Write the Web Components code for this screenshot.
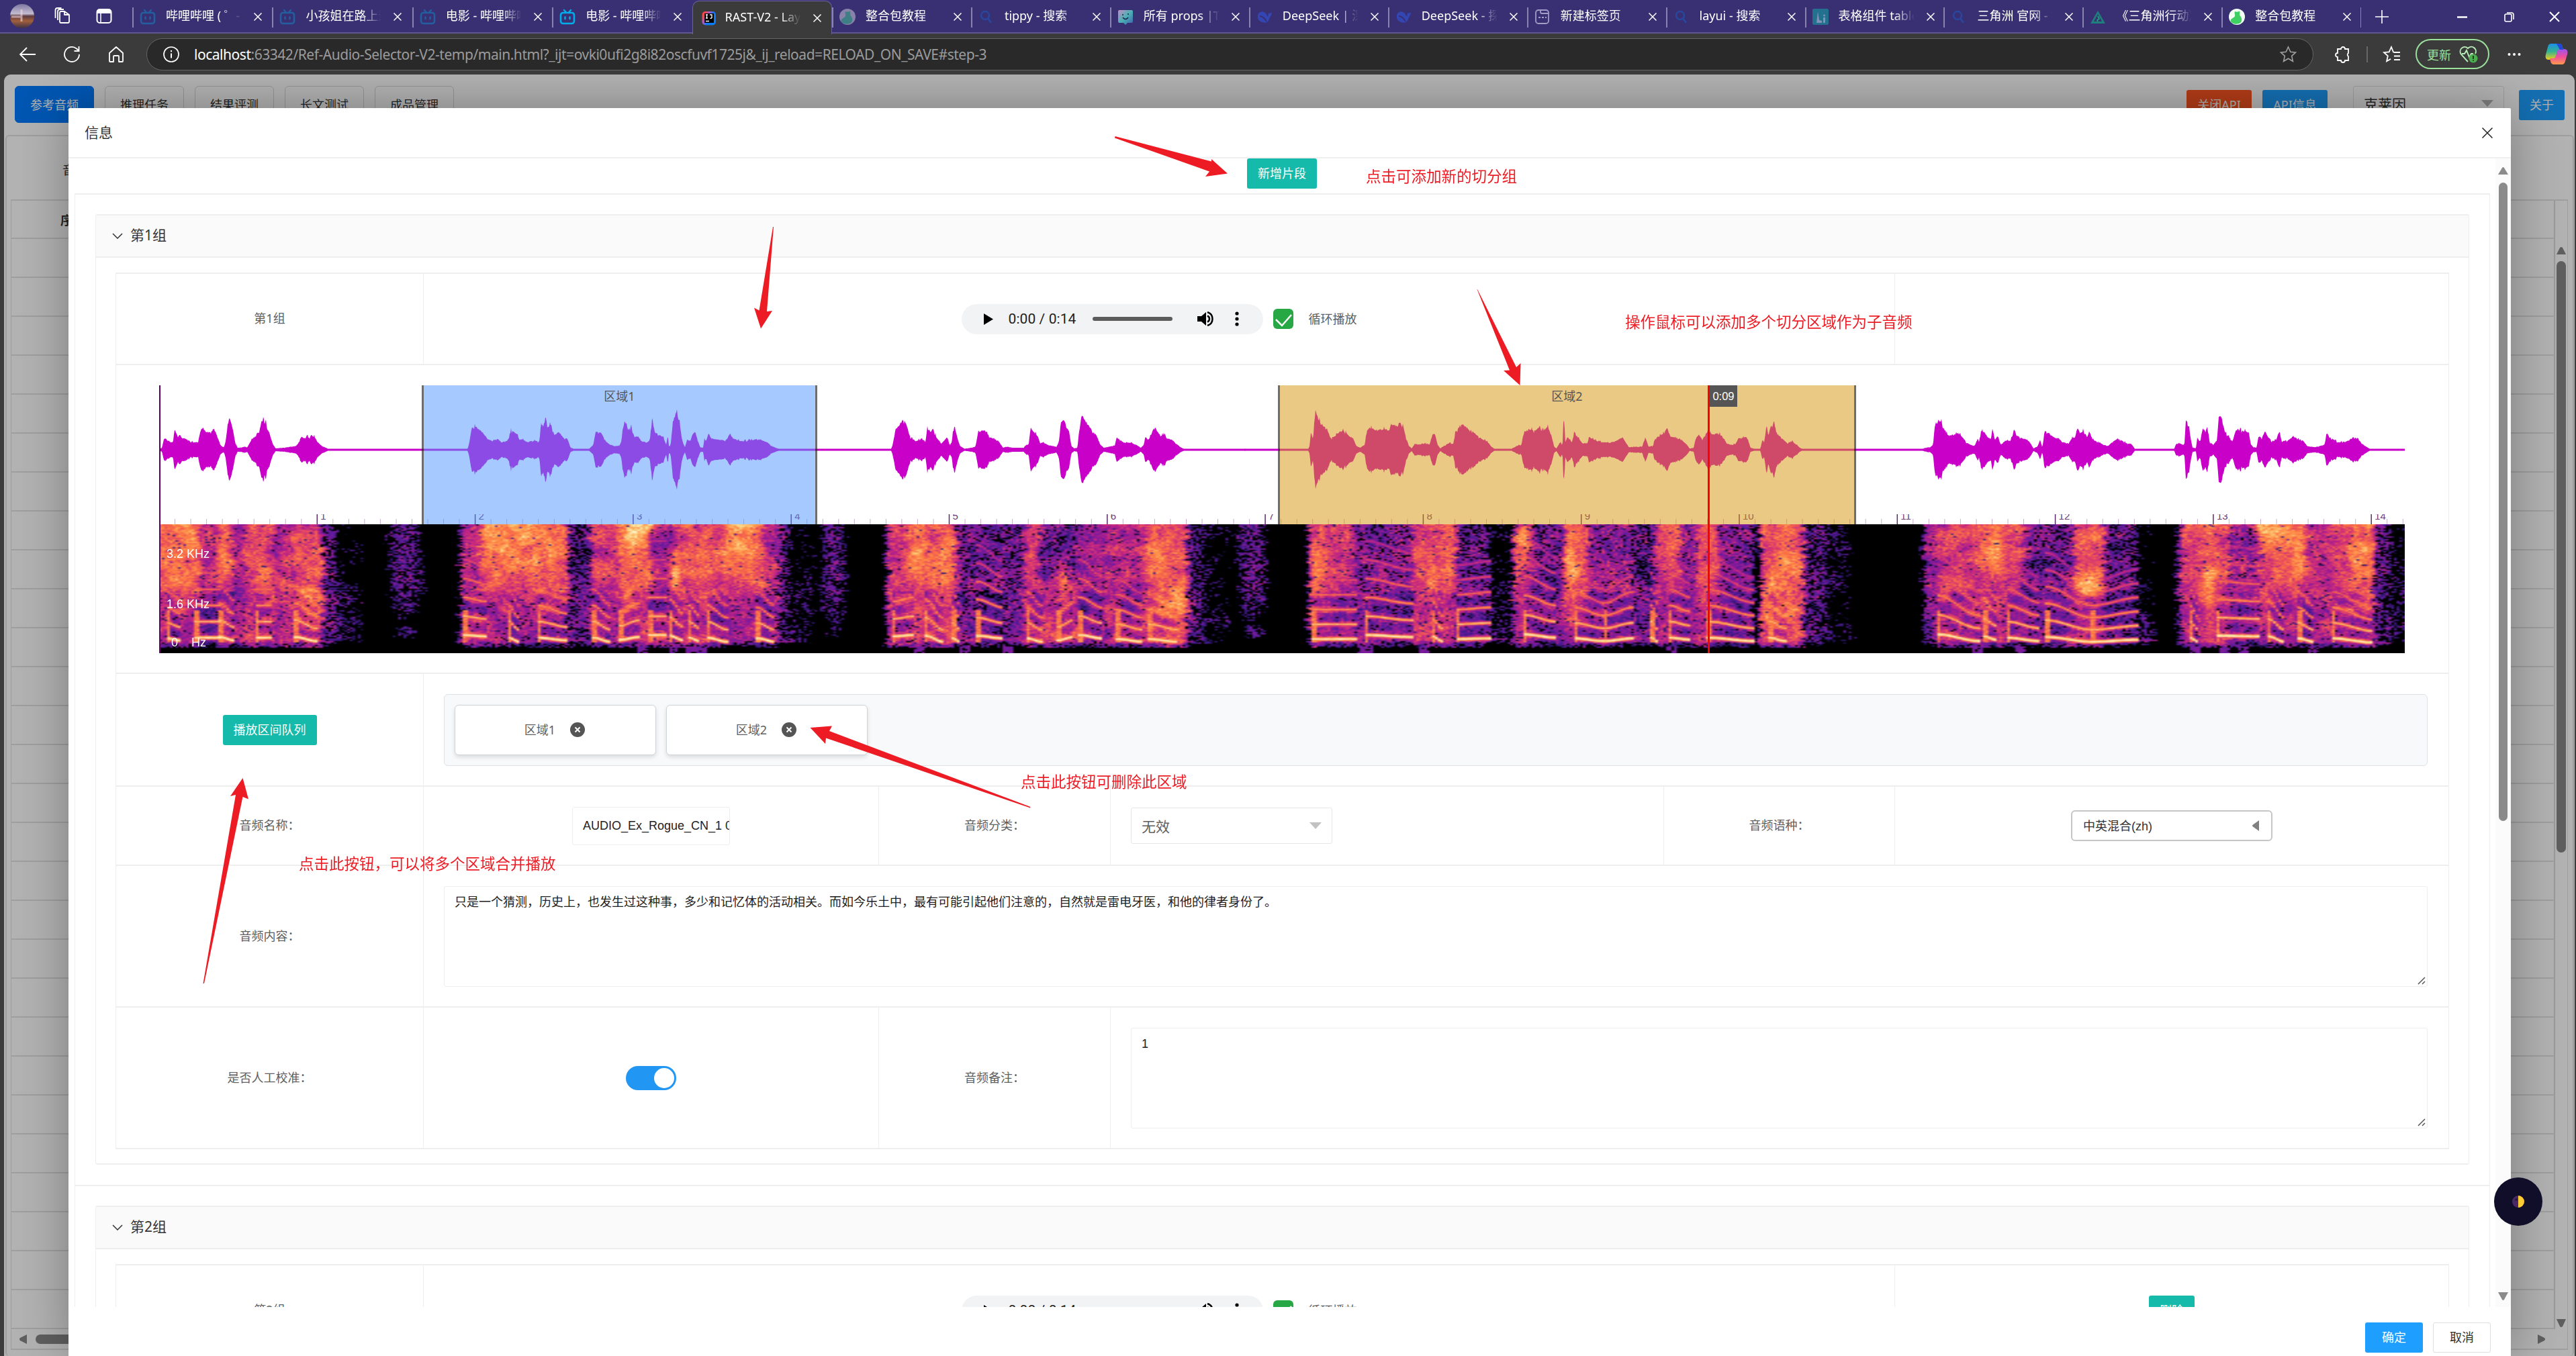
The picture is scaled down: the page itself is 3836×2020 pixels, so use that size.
<!DOCTYPE html>
<html lang="zh-CN">
<head>
<meta charset="utf-8">
<title>RAST-V2</title>
<style>
html,body{margin:0;padding:0;width:3836px;height:2020px;overflow:hidden;background:#3b3b3b}
body{font-family:"Noto Sans","Noto Sans CJK SC",sans-serif;font-size:18px;color:#5f5f5f}
</style>
</head>
<body>
<browser-window></browser-window>
<script>
const define=(name,html,init)=>customElements.define(name,class extends HTMLElement{
  constructor(){super();this.attachShadow({mode:'open'});}
  connectedCallback(){
    if(this.ready)return;this.ready=true;
    this.shadowRoot.innerHTML='<style>*{box-sizing:border-box}:host{box-sizing:border-box;display:block}</style>'+(typeof html==='function'?html(this):html);
    if(init)init(this,this.shadowRoot);
  }
});

/* spreads a text run over a known width */
define('fit-text','<style>:host{display:inline-block;white-space:pre;flex:none}:host([label]){padding-bottom:4px}</style><span><slot></slot></span>',(h,r)=>{
  if(!h.hasAttribute('w'))return;
  const w=+h.getAttribute('w'),s=r.querySelector('span'),n=r.querySelector('slot').assignedNodes({flatten:true}).map(x=>x.textContent).join('').length||1;
  s.style.letterSpacing=((w-s.getBoundingClientRect().width)/n)+'px';
});

const FAV={
 bili:'<rect x="2" y="6" width="20" height="16" rx="3.5" fill="none" stroke="currentColor" stroke-width="2.6"/><path d="M7 2l3 3.5M17 2l-3 3.5M8.5 12.5v2.5M15.5 12.5v2.5" stroke="currentColor" stroke-width="2.4" stroke-linecap="round" fill="none"/>',
 idea:'<defs><linearGradient id="g" x1="0" y1="0" x2="1" y2=".6"><stop offset="0" stop-color="#ff318c"/><stop offset=".15" stop-color="#fc4a3c"/><stop offset=".45" stop-color="#a05cd0"/><stop offset=".65" stop-color="#087cfa"/><stop offset="1" stop-color="#087cfa"/></linearGradient></defs><rect x="1.500" y="2" width="20.500" height="20.500" rx="5" fill="url(#g)"/><rect x="5" y="5" width="14" height="14" fill="#000"/><path d="M7 7h3M8.5 7v5M7 12h3M13 7h3v4.5l-1 .8h-1.5M7 16.500h5" stroke="#fff" stroke-width="1.4" fill="none"/>',
 pack:'<circle cx="12" cy="12" r="12" fill="#8882ab"/><path d="M9 4c2 1 4 1 7-.5 1 3-1 5 1.500 8 3 4 2 9-2 10.500-5 2-12 0-13-4 0-3 4-4 6-6 2-3-1-5 .5-8z" fill="#3d7f84"/>',
 pack2:'<circle cx="12" cy="12" r="12" fill="#f4fff4"/><path d="M9 4c2 1 4 1 7-.5 1 3-1 5 1.500 8 3 4 2 9-2 10.500-5 2-12 0-13-4 0-3 4-4 6-6 2-3-1-5 .5-8z" fill="#3fcf62"/>',
 search:'<circle cx="10" cy="10" r="6" fill="none" stroke="#2848a0" stroke-width="2.400"/><path d="M14 14.500l5 6.500" stroke="#2848a0" stroke-width="2.600"/>',
 tippy:'<defs><linearGradient id="g" x1="0" y1="0" x2="1" y2="1"><stop offset="0" stop-color="#c58dc5"/><stop offset=".5" stop-color="#4bb0b4"/><stop offset="1" stop-color="#3e5fb0"/></linearGradient></defs><path d="M1 4q0-2 2-2h18q2 0 2 2v15q0 2-2 2h-6l-3 3-3-3H3q-2 0-2-2z" fill="url(#g)"/><path d="M8 13q4 5 8 0M8 8v2M16 7v2" stroke="#182048" stroke-width="1.500" fill="none"/>',
 deep:'<path d="M2 10c1-5 6-7 9-5 3 1 4 4 6 7 1-2 0-5 2-6 1 1 3 1 4-1 0 5-3 7-4 10-1 5-6 7-10 5C4 19 1 15 2 10z" fill="#3445b4"/><path d="M5 11c4 0 7 3 10 8" stroke="#3a2f73" stroke-width="1.800" fill="none"/>',
 doc:'<rect x="2" y="2" width="19" height="20" rx="4" fill="none" stroke="#a39cc4" stroke-width="1.800"/><path d="M9 2v3q0 2 2 2h10M6 13h3M11 13h3M16 13h2" stroke="#a39cc4" stroke-width="1.800" fill="none"/>',
 layui:'<rect width="24" height="24" rx="2" fill="#24708f"/><path d="M8 4l2 13 4 1v3H6z" fill="#7f93b5"/><circle cx="17.500" cy="10" r="1.500" fill="#7f93b5"/><path d="M16 13h3v8h-3z" fill="#7f93b5"/>',
 tri:'<path d="M12 3l11 19H1z" fill="#1f7f7c"/><path d="M12 8l6 11H6z" fill="#39306f"/><path d="M12 11l2 4-3 2 1 2" stroke="#1f9f7c" stroke-width="1.800" fill="none"/>'};

define('browser-tab',h=>`<style>
:host{flex:none;height:50px;display:flex;align-items:center;padding-left:10px;position:relative;color:#fff;border-left:1px solid transparent}
:host(:not([active])){background:linear-gradient(#8a83ad,#8a83ad) -1px 11px/2px 30px no-repeat}
:host([active]){background:#3b3b3b;border:1px solid #6a62a0;border-bottom:0;border-radius:10px 10px 0 0;margin-top:1px;height:50px;padding-left:12px}
svg{width:24px;height:24px;flex:none;color:${h.getAttribute('tone')||'#235e9f'}}
.t{width:115px;margin-left:15px;overflow:hidden;white-space:pre;height:32px;line-height:28px;font-size:18px;-webkit-mask:linear-gradient(90deg,#000 72%,transparent 98%)}
:host([active]) .t{margin-left:12px}
.x{width:12px;height:12px;margin-left:16px}</style>
<svg viewBox="0 0 24 24">${FAV[h.getAttribute('icon')]}</svg><div class="t"><slot></slot></div>
<svg class="x" viewBox="0 0 12 12"><path d="M.5.5l11 11M11.500.5l-11 11" stroke="#fff" stroke-width="1.500"/></svg>`);

define('tab-strip',`<style>
:host{height:50px;background:#393073;display:flex;align-items:stretch;border-bottom:2px solid #5f578f}
.lead{width:197px;display:flex;align-items:center;padding-left:15px;gap:28px;flex:none}
browser-tab{width:206.95px}browser-tab:nth-of-type(-n+5){width:208.4px}
browser-tab[active]{z-index:1}
svg{flex:none}</style>
<div class="lead">
<svg width="36" height="36" viewBox="0 0 36 36"><defs><linearGradient id="a" x1="0" y1="0" x2="0" y2="1"><stop offset="0" stop-color="#7d78a0"/><stop offset=".4" stop-color="#c4bcd0"/><stop offset=".5" stop-color="#5b3b40"/><stop offset=".7" stop-color="#a2603c"/><stop offset="1" stop-color="#3e3147"/></linearGradient></defs><circle cx="18" cy="18" r="18" fill="url(#a)"/><path d="M2 19h14M17 8v18" stroke="#f3d6de" stroke-width="3" fill="none" opacity=".6"/></svg>
<svg width="28" height="28" viewBox="0 0 28 28" fill="none" stroke="#fff" stroke-width="1.800"><path d="M10 9q0-2 2-2h5l7 5v10q0 2-2 2H12q-2 0-2-2zM17 7v5h7M7 20V7q0-3 3-3h6M3.500 17V5q0-3 3-3h6" stroke-linejoin="round"/></svg>
<svg style="margin-left:8px" width="24" height="24" viewBox="0 0 24 24"><rect x="1.500" y="2" width="21" height="20" rx="4" fill="none" stroke="#fff" stroke-width="2"/><path d="M1.500 8V6q0-4 4-4h13q4 0 4 4v2z" fill="#fff"/><path d="M7 8v14" stroke="#fff" stroke-width="1.500"/></svg>
</div>
<browser-tab icon="bili">哔哩哔哩 ( ゜- ゜)</browser-tab><browser-tab icon="bili">小孩姐在路上遇到</browser-tab><browser-tab icon="bili">电影 - 哔哩哔哩</browser-tab><browser-tab icon="bili" tone="#00aeec">电影 - 哔哩哔哩</browser-tab><browser-tab icon="idea" active>RAST-V2 - Layui</browser-tab><browser-tab icon="pack">整合包教程</browser-tab><browser-tab icon="search">tippy - 搜索</browser-tab><browser-tab icon="tippy">所有 props |Tippy</browser-tab><browser-tab icon="deep">DeepSeek | 深度</browser-tab><browser-tab icon="deep">DeepSeek - 探索</browser-tab><browser-tab icon="doc">新建标签页</browser-tab><browser-tab icon="search">layui - 搜索</browser-tab><browser-tab icon="layui">表格组件 table</browser-tab><browser-tab icon="search">三角洲 官网 - 搜</browser-tab><browser-tab icon="tri">《三角洲行动》</browser-tab><browser-tab icon="pack2">整合包教程</browser-tab>
<svg width="320" height="50" viewBox="3516 0 320 50" fill="none" stroke="#fff" stroke-width="1.600"><path d="M3516 11v30" stroke="#8a83ad" stroke-width="2"/><path d="M3538 25h20M3548 15v20" /><path d="M3660 25.500h15" stroke-width="2.500"/><rect x="3731" y="21" width="10" height="11" rx="2"/><path d="M3734 19h7q3 0 3 3v7" /><path d="M3798 18l14 14M3812 18l-14 14" stroke-width="2"/></svg>`);

define('tool-bar',`<style>
:host{height:61px;background:#3b3b3b;display:flex;align-items:center;color:#fff}
.nav{width:218px;display:flex;padding-left:29px;gap:42px;flex:none}
.url{width:3227px;height:48px;border:1.500px solid #646464;border-radius:24px;background:#292929;display:flex;align-items:center;padding:0 24px;font-size:21px;color:#9b9b9b;flex:none}
.url b{font-weight:400;color:#fff}.url fit-text{margin-left:22px;margin-right:auto}
.r{display:flex;align-items:center;flex:1}
.up{width:110px;height:45px;border:2px solid #9be19c;border-radius:23px;color:#9be19c;display:flex;align-items:center;justify-content:center;gap:12px;margin-left:22px}
svg{flex:none;overflow:visible}</style>
<div class="nav" >
<svg width="24" height="24" viewBox="0 0 24 24" fill="none" stroke="#fff" stroke-width="1.800"><path d="M24 12H1M11 2L1 12l10 10"/></svg>
<svg width="24" height="24" viewBox="0 0 24 24" fill="none" stroke="#fff" stroke-width="1.800"><path d="M23 12a11 11 0 1 1-4-8.500L22 6M22.500 0v7h-7"/></svg>
<svg width="24" height="24" viewBox="0 0 24 24" fill="none" stroke="#fff" stroke-width="1.800" stroke-linejoin="round"><path d="M2 10L12 1l10 9v12q0 1-1 1h-5v-8q0-1-1-1H9q-1 0-1 1v8H3q-1 0-1-1z"/></svg></div>
<div class="url"><svg width="24" height="24" viewBox="0 0 24 24" fill="none" stroke="#fff" stroke-width="1.700"><circle cx="12" cy="12" r="11"/><path d="M12 10.500v7M12 6v2.200" stroke-width="2"/></svg>
<fit-text w="1180"><b>localhost</b>:63342/Ref-Audio-Selector-V2-temp/main.html?_ijt=ovki0ufi2g8i82oscfuvf1725j&amp;_ij_reload=RELOAD_ON_SAVE#step-3</fit-text>
<svg width="25" height="24" viewBox="0 0 24 24" fill="none" stroke="#a0a0a0" stroke-width="1.600"><path d="M12 1l3.300 7.300 7.700.8-5.800 5.200 1.700 8L12 18.200 5.100 22.300l1.700-8L1 9.100l7.700-.8z"/></svg></div>
<div class="r">
<svg style="margin-left:31px" width="24" height="24" viewBox="0 0 24 24" fill="none" stroke="#fff" stroke-width="1.800"><path d="M5 4h5a3 3 0 0 1 6 0h5v6a3 3 0 0 0 0 5v6h-5a3 3 0 0 1-6 0H5v-5a3 3 0 0 1 0-6z"/></svg>
<svg style="margin-left:24px" width="2" height="24"><path d="M1 0v24" stroke="#666" stroke-width="2"/></svg>
<svg style="margin-left:23px" width="26" height="24" viewBox="0 0 26 24" fill="none" stroke="#fff" stroke-width="1.800"><path d="M16 9l-1-.5L12 1 8.700 8.300 1 9.100l5.800 5.200-1.700 8 6-3.500M16 9h9M16 14.500h9M16 20h9"/></svg>
<div class="up"><span>更新</span><svg width="28" height="26" viewBox="0 0 28 26" fill="none" stroke="#b6ecb6" stroke-width="1.900"><path d="M13 24L3 13C-2 6 7-2 13 4c6-6 15 1 11 8M4 12h4l3-5 4 10 3-5h3"/><circle cx="21" cy="19" r="6.500" fill="#4caf50" stroke="none"/><path d="M21 15v5M21 21.500v1.500" stroke="#183c18"/></svg></div>
<svg style="margin-left:27px" width="20" height="6" fill="#fff"><circle cx="2.500" cy="3" r="2"/><circle cx="10" cy="3" r="2"/><circle cx="17.500" cy="3" r="2"/></svg>
<svg style="margin-left:36px" width="34" height="31" viewBox="0 0 34 31"><defs><linearGradient id="l" x1="0" y1="0" x2="0" y2="1"><stop offset="0" stop-color="#1b8fe8"/><stop offset=".5" stop-color="#35b48f"/><stop offset="1" stop-color="#f3cf19"/></linearGradient><linearGradient id="m" x1="0" y1="0" x2="0" y2="1"><stop offset="0" stop-color="#9a55f0"/><stop offset=".5" stop-color="#f04d9c"/><stop offset="1" stop-color="#ff9a4a"/></linearGradient></defs><path d="M9 0h12q4 0 5 5l1 4h-5q-3 0-4 4l-2 8q-1 3-4 3H6q-7 0-5-8L4 5Q5 0 9 0z" fill="url(#l)"/><path d="M25 31H13q-4 0-5-5l-1-4h5q3 0 4-4l2-6q1-4 4-4h6q7 0 5 8l-3 10q-1 5-5 5z" fill="url(#m)"/><path d="M17 0h4q4 0 5 5l1 4h-5z" fill="#2446d8"/></svg>
</div>`);

/* page behind the dialog */
define('back-page',()=>{
  let rows='';for(let i=1;i<=28;i++)rows+=`<div class="row"><i>${i}</i></div>`;
  return `<style>
:host{height:1909px;background:#fff;display:flex;flex-direction:column;color:#333}
.top{height:90px;display:flex;align-items:flex-start;padding:17px 15px 0 16px;gap:16px;flex:none}
.tb{width:118px;height:55px;border:1.500px solid #d6d6d6;border-radius:6px;display:flex;align-items:center;justify-content:center;color:#333;padding-bottom:2px}
.tb.on{background:#007bff;color:#fff;border-color:#007bff}
.bt{height:45px;margin-top:6px;border-radius:3px;color:#fff;background:#1e9fff;display:flex;align-items:center;justify-content:center;width:97px;padding-bottom:3px}
.sel{width:225px;height:55px;border:1.500px solid #e0e0e0;border-radius:3px;display:flex;align-items:center;justify-content:space-between;padding:0 15px 3px;font-size:21px;margin-left:22px}
.card{flex:1;border:2px solid #e3e3e3;border-radius:6px;margin:0 1px 0 2px;border-bottom:0;display:flex;flex-direction:column}
.f{height:94px;padding:35px 0 0 83px;line-height:30px}
.tab{border:2px solid #e3e3e3;border-width:2px 1px 2px 1px;margin:0 7px 0 6px;display:flex;height:1714px;flex-direction:column}
.row{height:58px;border-bottom:2px solid #e3e3e3;display:flex;align-items:center;flex:none;border-right:2px solid #dcdcdc;width:100%}
.main{width:3788px}.row i{font-style:normal;display:block;width:190px;text-align:center;font-family:"Liberation Sans","Noto Sans CJK SC",sans-serif}
.h{height:57px}.row.h i{font-weight:700;width:auto;padding-left:73px}
.in{display:flex;height:1681px;overflow:hidden}
.vs{width:21px;padding-top:69px;display:flex;flex-direction:column;align-items:center;flex:1}
.th{width:14px;background:#888;border-radius:7px;height:881px;margin-top:10px}
.hs{display:flex;align-items:center;height:29px;padding:0 33px 0 12px;gap:13px}
.hs div{width:1800px;margin-right:auto;height:14px;border-radius:7px;background:#888}</style>
<div class="top"><div class="tb on">参考音频</div><div class="tb">推理任务</div><div class="tb">结果评测</div><div class="tb">长文测试</div><div class="tb">成品管理</div>
<div class="bt" style="background:#ff5722;margin-left:auto">关闭API</div><div class="bt">API信息</div><div class="sel">克莱因<svg width="18" height="10"><path d="M0 0h18l-9 10z" fill="#b5b5b5"/></svg></div><div class="bt" style="width:68px;margin-left:6px">关于</div></div>
<div class="card"><div class="f">音频</div><div class="tab"><div class="in"><div class="main"><div class="row h"><i>序号</i></div>${rows}</div>
<div class="vs"><svg width="14" height="11"><path d="M0 11L5 1q2-2 4 0l5 10z" fill="#888"/></svg><div class="th"></div><svg style="margin-top:695px" width="14" height="12"><path d="M0 0L5 11q2 2 4 0l5-11z" fill="#888"/></svg></div></div>
<div class="hs"><svg width="11" height="14"><path d="M11 0L1 5q-2 2 0 4l10 5z" fill="#888"/></svg><div></div><svg width="11" height="14"><path d="M0 0l10 5q2 2 0 4L0 14z" fill="#888"/></svg></div></div></div>`;
});

define('l-btn','<style>:host{display:inline-flex;align-items:center;justify-content:center;height:45px;border-radius:3px;background:#16baaa;color:#fff;font-size:18px;padding:0 16px 3px;flex:none;white-space:nowrap}:host([blue]){background:#1e9fff;padding:0 25px 3px}:host([plain]){background:#fff;color:#333;border:1.500px solid #dedede;padding:0 24px 3px}</style><slot></slot>');

define('audio-player',`<style>:host{width:449px;height:45px;border-radius:23px;background:#f1f3f4;display:flex;align-items:center;padding-left:33px;font:21px Roboto,sans-serif;color:#222;flex:none}
.bar{width:119px;height:6px;border-radius:3px;background:#5c5c5c;margin-left:24px}</style>
<svg width="14" height="17"><path d="M0 0l14 8.500L0 17z" fill="#000"/></svg><fit-text w="101" style="margin-left:23px">0:00 / 0:14</fit-text><div class="bar"></div>
<svg style="margin-left:37px" width="24" height="22" viewBox="0 0 24 22"><path d="M0 7h6l7-6v20l-7-6H0z" fill="#000"/><path d="M15 1c10 3 10 17 0 20M15 6.500c4 1.500 4 7.500 0 9" fill="none" stroke="#000" stroke-width="2.500"/></svg>
<svg style="margin-left:32px" width="6" height="22"><circle cx="3" cy="3" r="2.600"/><circle cx="3" cy="11" r="2.600"/><circle cx="3" cy="19" r="2.600"/></svg>`);

define('loop-check',`<style>:host{display:flex;align-items:center;margin-left:15px;gap:23px}span{padding-bottom:3px}</style><svg width="30" height="30"><rect width="30" height="30" rx="6" fill="#28a745"/><path d="M4 16l9 9L27 9" stroke="#fff" stroke-width="2.500" fill="none"/></svg><span><slot></slot></span>`);

/* grid rows and cells of the detail table */
define('grid-row','<style>:host{display:flex;border-bottom:2px solid #eee}</style><slot></slot>',h=>{h.style.height=h.getAttribute('h')+'px'});
define('grid-cell','<style>:host{display:flex;align-items:center;justify-content:center;border-right:1px solid #eee;flex:none}:host([left]){justify-content:flex-start}:host([last]){border-right:0;flex:1}</style><slot></slot>',h=>{if(h.hasAttribute('w'))h.style.width=h.getAttribute('w')+'px'});
define('group-panel',h=>`<style>:host{border-top:2px solid #eee;padding:29px 30px 30px}
.c{border:1px solid #eee;border-width:2px 1px;border-radius:3px}
.t{height:63px;background:#fafafa;border-bottom:2px solid #eee;display:flex;align-items:center;padding-left:24px;gap:11px;font-size:21px;color:#333}
.t span{padding-bottom:5px}.b{padding:22px 29px 21px}.g{border:1px solid #eee;border-width:2px 1px 0}</style>
<div class="c"><div class="t"><svg width="16" height="9"><path d="M1 1l7 7 7-7" fill="none" stroke="#333" stroke-width="1.500"/></svg><span>${h.getAttribute('label')}</span></div><div class="b"><div class="g"><slot></slot></div></div></div>`);

define('queue-item',`<style>:host{width:300px;height:75px;border:1.500px solid #ced4da;border-radius:6px;background:#fff;box-shadow:0 3px 6px rgba(0,0,0,.12);display:flex;align-items:center;justify-content:center;gap:22px;padding-right:2px}span{padding-bottom:3px}</style><span><slot></slot></span><svg width="22" height="22"><circle cx="11" cy="11" r="11" fill="#555"/><path d="M7.500 7.500l7 7M14.500 7.500l-7 7" stroke="#fff" stroke-width="2"/></svg>`);
define('play-queue','<style>:host{width:2954px;height:107px;border:1.500px solid #dee2e6;border-radius:6px;background:#f8f9fb;display:flex;align-items:center;padding-left:15px;gap:15px;margin-left:30px}</style><slot></slot>');
define('text-area','<style>:host{height:150px;border:1.500px solid #eee;border-radius:3px;margin-left:30px;color:#222;padding:8px 15px;line-height:30px;display:flex;justify-content:space-between;flex:none;font-family:"Liberation Sans","Noto Sans CJK SC",sans-serif}svg{align-self:flex-end;margin:0 -13px -6px 0}</style><span><slot></slot></span><svg width="12" height="12"><path d="M1 11L11 1M7 11l4-4" stroke="#555" stroke-width="1.500"/></svg>',h=>{h.style.width=h.getAttribute('w')+'px'});
define('text-input','<style>:host{width:235px;height:57px;border:1.500px solid #eee;border-radius:3px;overflow:hidden;white-space:pre;padding-left:15px;display:flex;align-items:center;font-family:"Liberation Sans",sans-serif;color:#222}</style><fit-text w="222"><slot></slot></fit-text>');
define('l-select','<style>:host{width:300px;height:54px;border:1.500px solid #e6e6e6;border-radius:3px;display:flex;align-items:center;justify-content:space-between;padding:0 15px;font-size:21px;margin-left:30px;background:#fff}</style><span><slot></slot></span><svg width="18" height="10"><path d="M0 0h18l-9 10z" fill="#c2c2c2"/></svg>');
define('n-select','<style>:host{width:300px;height:46px;border:2px solid #c6c6c6;border-radius:6px;display:flex;align-items:center;justify-content:space-between;padding:0 18px 0 16px;color:#333;background:#fff;font-family:"Liberation Sans","Noto Sans CJK SC",sans-serif}span{padding-bottom:3px}</style><span><slot></slot></span><svg width="10" height="16"><path d="M10 0L1 6.500q-2 1.500 0 3L10 16z" fill="#808080"/></svg>');
define('toggle-switch','<style>:host{width:75px;height:36px;border-radius:18px;background:#2196f3;display:flex;align-items:center;justify-content:flex-end;padding:3px}i{width:30px;height:30px;border-radius:50%;background:#fff}</style><i></i>');

/* envelope points: x,amplitude pairs, grouped by survey strip (origin, scale) */
const ENV=[[-237.5,1.225,'291,3 296,8 300,45 306,40 312,30 316,30 319,80 325,50 329,60 333,45 338,45 345,35 355,30 362,30 366,75 369,88 378,70 385,68 389,80 394,70 399,40 404,15 409,10 412,30 416,100 419,124 424,95 430,25 434,8 440,8 446,12 452,10 458,35 466,55 474,75 480,132 486,100 493,60 498,25 503,6 520,8 530,12 540,15 545,25 550,55 556,45 562,60 565,45 568,58 574,52 580,30 588,15 597,6 600,2 853,2 856,20 861,85 866,93 872,85 880,70 886,55 892,40 900,35 908,45 915,30 925,35 928,45 932,78 938,70 944,60 948,40 955,40 962,30 970,35 980,35 984,30 987,95 992,100 996,130 1000,90 1005,95 1012,60 1020,70 1030,45 1036,45 1041,10 1048,3 1075,3 1083,20 1087,70 1092,72 1098,65 1104,40 1110,25 1120,15 1130,15 1134,30 1137,95 1140,118 1146,80 1152,90 1158,50 1164,55 1170,35 1180,30 1186,35 1190,128 1195,70 1203,60 1210,50 1216,20 1219,60 1221,10 1224,20 1228,110 1234,148 1240,110 1246,30 1250,10 1254,40 1260,35 1264,60 1268,75 1273,40 1278,10 1283,8 1286,45 1289,35 1293,65 1298,45 1310,40 1320,38 1327,42 1332,65 1338,45 1350,35 1360,35 1370,38 1380,42 1390,38 1400,30 1408,15 1418,6 1425,2'],
[1042.5,1.225,'58,2 61,20 66,80 75,105 81,121 87,95 92,55 98,40 105,35 115,45 121,30 124,95 130,70 135,88 140,50 150,25 156,40 160,50 165,20 169,30 171,75 175,80 180,40 184,15 192,4 205,8 212,12 217,70 224,75 231,78 238,50 246,42 254,35 262,8 268,12 280,8 300,8 305,20 309,20 313,90 320,65 326,55 330,25 335,30 345,18 360,12 364,30 368,110 371,120 375,115 379,85 383,70 387,15 392,6 398,8 404,125 407,136 412,115 417,100 425,75 432,60 440,20 446,8 456,12 466,18 470,50 475,40 483,28 495,28 505,20 514,8 519,20 522,55 526,40 530,45 536,80 539,90 542,80 550,55 556,60 562,45 570,40 578,25 586,10 594,2 700,2 704,5 707,2 819,2 822,20 824,70 828,40 832,157 838,118 846,95 853,85 860,45 868,55 876,70 884,75 893,55 901,45 907,15 914,8 922,20 926,80 932,85 945,78 958,80 966,78 970,100 980,98 986,108 992,100 997,50 1003,15 1008,5 1013,25 1020,20 1032,25 1040,20 1046,60 1050,65 1055,20 1060,5 1070,20 1078,30 1083,20 1088,70 1095,95 1100,100 1110,85 1120,70 1128,55 1138,40 1146,35 1153,12 1160,2 1190,4 1200,15 1208,20 1212,70 1220,80 1230,75 1240,88 1248,75 1256,90 1262,60 1268,12 1272,5 1278,30 1283,20 1285,140 1288,30 1292,50 1300,30 1305,70 1312,45 1320,25 1328,25 1332,50 1340,40 1355,30 1370,28 1380,35 1392,50 1398,30 1404,10 1415,12 1428,12 1434,50 1440,12 1448,15 1452,45 1460,55 1468,65 1474,85 1480,50 1490,50 1500,40 1510,20 1515,4 1522,8 1526,45 1532,60 1538,40 1542,55 1548,75 1556,60 1567,65'],
[2322.5,1.2288,'0,65 8,45 15,25 22,20 30,22 36,45 45,48 52,50 58,8 65,4 76,4 80,40 83,30 87,90 91,60 96,100 98,85 101,115 105,70 110,60 118,40 126,25 134,35 142,20 150,6 155,2 370,2 380,8 388,12 392,20 395,90 400,122 408,105 414,70 420,55 430,60 438,65 446,50 452,30 460,20 468,15 474,45 476,30 480,75 486,70 492,50 498,40 501,90 505,40 510,55 516,20 524,35 534,35 540,80 546,55 556,45 565,40 572,20 576,5 584,15 588,40 592,10 596,75 604,65 612,50 622,45 630,30 640,25 646,45 652,50 656,85 662,65 668,75 674,50 678,75 684,40 695,30 705,20 712,15 720,30 730,45 738,35 748,25 756,20 762,2 833,2 836,20 842,28 848,20 852,20 855,125 860,90 864,40 867,8 873,6 876,50 880,30 886,85 890,70 894,90 898,30 905,20 912,40 915,138 920,125 926,70 934,50 940,35 941,40 945,72 950,82 956,75 965,72 970,68 973,25 978,10 984,8 988,60 993,45 1000,75 1005,50 1012,35 1020,40 1026,75 1030,35 1040,35 1050,50 1060,45 1070,35 1076,15 1090,10 1100,15 1108,20 1113,65 1118,45 1125,42 1132,30 1145,32 1152,35 1160,50 1170,45 1176,25 1185,12 1193,2 1254,2']];
/* energy blocks: x0,x1,upper level,lower level,lowest y of the block */
const BLK='0,60,.66,.5 60,89,.5,.42 89,109,.64,.55 109,126,.45,.45 126,171,.62,.52 171,179,.42,.42 179,205,.52,.5 205,244,.58,.6 244,262,.28,.3 262,300,.08,.2 340,390,.27,.22,126 348,380,.0,.2,168 446,452,.3,.2 452,481,.48,.48 481,562,.69,.46 562,607,.63,.52 607,642,.27,.32 642,685,.56,.5 685,730,.68,.54 730,767,.42,.48 767,840,.58,.53 840,901,.68,.45 901,922,.5,.48 922,940,.22,.22 940,975,.08,.13 983,1024,.27,.2,138 990,1012,0,.16,170 1084,1112,.55,.52 1112,1145,.66,.52 1145,1189,.58,.55 1189,1287,.31,.37 1287,1312,.55,.53 1312,1369,.34,.55 1369,1414,.42,.45 1414,1467,.47,.5 1467,1532,.62,.6 1532,1556,.25,.28 1556,1590,.08,.17 1602,1652,.28,.27,132 1610,1642,0,.28,168 1712,1736,.54,.58 1736,1781,.5,.48 1781,1867,.33,.4 1867,1895,.58,.5 1895,1908,.44,.48 1908,1932,.6,.5 1932,1981,.3,.42 1981,2010,.05,.18 2014,2042,.52,.48 2042,2091,.32,.42 2091,2128,.62,.5 2128,2193,.37,.42 2193,2226,.27,.38 2226,2267,.62,.5 2267,2291,.38,.45 2291,2322,.58,.5 2322,2375,.35,.42 2384,2449,.63,.6 2449,2485,.25,.26 2485,2518,.13,.12 2626,2646,.43,.35 2646,2705,.56,.5 2705,2774,.6,.5 2774,2851,.35,.42 2851,2896,.64,.54 2896,2945,.3,.36 2945,2965,.05,.2 3002,3012,.3,.3 3012,3039,.56,.52 3039,3063,.65,.56 3063,3085,.56,.52 3085,3128,.38,.45 3128,3197,.68,.48 3197,3226,.5,.48 3226,3260,.54,.52 3260,3299,.62,.54 3299,3318,.26,.25 3318,3344,.1,.17';
/* voiced strokes: x0,x1,pitch start,pitch end */
const VOI='11,28,23,20 52,89,24,24 89,109,25,20 142,167,24,24 201,232,25,19 452,485,28,26 518,534,24,18 562,607,24,20 644,670,24,18 685,713,21,25 728,754,28,28 758,779,27,20 787,803,24,19 814,844,24,18 889,915,23,18 1091,1122,26,28 1139,1165,27,18 1180,1191,23,18 1216,1255,27,23 1291,1312,23,18 1336,1359,20,25 1369,1402,28,23 1425,1463,22,18 1473,1514,22,18 1716,1781,22,22 1795,1865,28,25 1894,1908,26,19 1930,1981,22,23 2030,2079,29,24 2106,2150,23,19 2150,2192,19,23 2221,2230,24,18 2247,2279,24,21 2304,2375,24,19 2396,2420,24,19 2646,2709,29,19 2716,2733,26,21 2750,2799,24,19 2808,2876,25,18 2876,2947,18,21 3022,3035,24,18 3063,3124,27,26 3139,3163,26,18 3184,3206,23,18 3234,3295,23,17';
/* hot spots: x,y,rx,ry,gain */
const HOT='490,12,70,22,.1 580,50,25,70,.1 708,8,25,25,.2 698,108,12,22,.2 765,80,8,30,.25 860,20,25,30,.12 225,110,22,30,.12 150,80,15,40,.06 1125,20,15,40,.12 1165,60,15,50,.1 1345,90,10,40,.15 1500,115,30,40,.12 2735,35,12,35,.2 2030,15,8,30,.2 2100,70,12,40,.18 2420,90,30,50,.1 2870,95,22,20,.2 3050,100,14,30,.15 3150,10,30,18,.15 3275,70,15,80,.1 1895,65,6,60,.15 1722,60,20,40,.1';

define('wave-view',()=>{
  let seed=7;const rnd=()=>(seed=(seed*1664525+1013904223)>>>0)/4294967296;
  const pts=[];for(const[o,s,p]of ENV)for(const q of p.split(' ')){const[x,a]=q.split(',').map(Number);pts.push([x/s+o,a/2.613]);}
  const top=[],bot=[];let k=0;
  for(let x=0;x<=3344;x+=1){while(k<pts.length-2&&pts[k+1][0]<x)k++;
    const a=pts[k],b=pts[k+1],t=Math.min(1,Math.max(0,(x-a[0])/(b[0]-a[0]||1)));let v=a[1]+(b[1]-a[1])*t;
    if(v>2){const q=rnd();v*=.94+rnd()*.08+(q>.93?.14:0)-(q<.12?.1:0);}v=Math.max(1.5,v);top.push(x+','+(96-v).toFixed(1));bot.unshift(x+','+(96+v*(.97+rnd()*.03)).toFixed(1));}
  let tk='',lb='';for(let i=1;i<=142;i++){const x=(i*23.53).toFixed(1);tk+=i%10?`<path d="M${x} 199v8" stroke="#c9b0cc" stroke-width="1"/>`:`<path d="M${x} 192v15" stroke="#5d2a68" stroke-width="1.500"/>`;if(i%10==0)lb+=`<text x="${+x+5}" y="200">${i/10}</text>`;}
  return `<style>:host{width:3344px;height:399px;margin:30px 0 0 64px;flex:none;position:relative}
svg,canvas{display:block}canvas{width:3344px;height:192px}
.rg{position:absolute;top:0;height:207px;text-align:center;line-height:32px;border:3px solid rgba(30,30,30,.65);border-width:0 3px;color:#555}
.hz{position:absolute;left:7px;color:#fff;font:18px "Liberation Sans",sans-serif;white-space:pre;line-height:20px}
.cur{position:absolute;top:0;left:2306px;width:3px;height:399px;background:#f00}.tag{position:absolute;left:2309px;top:0;width:41px;height:32px;background:#555;color:#fff;font:16.500px/32px "Liberation Sans",sans-serif;text-align:center}
.st{position:absolute;left:0;top:0;width:2px;height:399px;background:#5f0060}</style>
<svg width="3344" height="207"><polygon fill="#c800c8" points="${top.join(' ')} ${bot.join(' ')}"/>${tk}<clipPath id="c"><rect y="192" width="3344" height="15"/></clipPath><g clip-path="url(#c)" font-family="Liberation Sans" font-size="15" fill="#6d3d78">${lb}</g></svg>
<canvas width="836" height="96"></canvas>
<div class="rg" style="left:391px;width:589px;background:rgba(77,149,255,.5);background-clip:padding-box">区域1</div>
<div class="rg" style="left:1666px;width:861px;background:rgba(213,147,9,.5);background-clip:padding-box">区域2</div>
<div class="hz" style="top:241px;left:11px">3.2 KHz</div><div class="hz" style="top:316px;left:11px">1.6 KHz</div><div class="hz" style="top:373px;left:18px">0    Hz</div>
<div class="st"></div><div class="cur"></div><div class="tag">0:09</div>`;
},(h,r)=>{
  let seed=99;const rnd=()=>{seed=(seed+0x6D2B79F5)|0;let t=Math.imul(seed^seed>>>15,1|seed);t=t+Math.imul(t^t>>>7,61|t)^t;return((t^t>>>14)>>>0)/4294967296};
  const W=836,H=96,v=new Float32Array(W*H),P=s=>s.split(' ').map(q=>q.split(',').map(Number));
  const noise=(cx,cy)=>{const g=[];for(let i=0;i<420*60;i++)g.push(rnd());return(x,y)=>{const a=x/cx,b=y/cy,i=a|0,j=b|0,u=a-i,w=b-j,q=(p,s)=>g[(p%420)+s*420];return(q(i,j)*(1-u)+q(i+1,j)*u)*(1-w)+(q(i,j+1)*(1-u)+q(i+1,j+1)*u)*w-.5}};
  const big=noise(8,9),mid=noise(2.5,7),edge=noise(12,2);
  /* column-wise level field; boundaries are softened and then warped per row */
  const F=new Float32Array(W*H),V=new Uint8Array(W*H);
  for(const[x0,x1,a,b,lim]of P(BLK))for(let i=Math.max(0,Math.round(x0/4));i<x1/4&&i<W;i++)for(let j=0;j<H;j++){const y=j*2;
    if(lim){const cx=(x0+x1)/2,rx=(x1-x0)/2,dx=(i*4-cx)/rx;const y0=a?-60:lim-18,y1=lim,dy=(y-(y0+y1)/2)/((y1-y0)/2),d=dx*dx*.8+dy*dy*dy*dy*.5;if(d>1)continue;F[j*W+i]=Math.max(F[j*W+i],(a?Math.max(a,b):b)*(1.08-.75*d));V[j*W+i]=1;continue;}
    if(y>182)continue;const t=Math.min(1,Math.max(0,(y-60)/70));F[j*W+i]=a+(b-a)*t-(y>173?(y-173)*.028:0);}
  const at=(i,j)=>F[j*W+Math.max(0,Math.min(W-1,i))];
  for(let j=0;j<H;j++){const jit=rnd()-.5;for(let i=0;i<W;i++){
    const s=Math.round(i+edge(i,j)*3+jit*1.5);const l0=(at(s-1,j)+at(s,j)*2+at(s+1,j))/4;if(l0<=.03)continue;
    let l=l0;if(!V[j*W+i])l+=(l>.3?-.015:0)+big(i,j)*.2+mid(i,j)*.16;
    let val=l+(rnd()+rnd()-1)*(l0<.4?.2:.14);
    if(l0<.4&&rnd()<(.4-l0)*1.9)val=0;else if(rnd()<(l0<.52?.07:.015))val*=.3;
    v[j*W+i]=val;}}
  for(const[cx,cy,rx,ry,g]of P(HOT))for(let j=0;j<H;j++)for(let i=Math.max(0,(cx-2*rx)/4|0);i<(cx+2*rx)/4&&i<W;i++){const d=((i*4-cx)/rx)**2+((j*2-cy)/ry)**2;if(d<4&&v[j*W+i]>.2)v[j*W+i]+=g*Math.exp(-d);}
  for(const[x0,x1,f0,f1]of P(VOI)){
    for(let i=Math.round(x0/4);i<=x1/4&&i<W;i++){let t=(i*4-x0)/(x1-x0);t=Math.min(1,Math.max(0,t));t=t*t*(3-2*t);const f=f0+(f1-f0)*t;
      for(let j=50;j<H;j++){const p=(192-j*2)/f;if(p>.6&&p<5)v[j*W+i]-=.1*(.5-.5*Math.cos((p-.5)*2*Math.PI)>.5?0:1);}
      for(let n=1;n<=6;n++){const y=192-n*f,g=[0,1,.88,.78,.7,.62,.54][n];for(let j=0;j<H;j++){const d=Math.abs(j*2-y)/(n<2?4:3.4);const e=g*Math.exp(-d*d)-(rnd()*.08);if(e>v[j*W+i])v[j*W+i]=e;}}
      if(i*4<x0+5)for(let j=64;j<88;j++)v[j*W+i]=Math.max(v[j*W+i],.6+rnd()*.16);}
    for(let i=x1/4|0;i<(x1+26)/4&&i<W;i++){const j=Math.round((192-f1)/2);v[j*W+i]=Math.max(v[j*W+i],.4);}
  }
  for(const x of[713,760,785,803,1126,1195,1258,1785,1795,1877,2247,2703,2767,3026,3069,3098,3203])for(let i=x/4|0;i<x/4+3;i++)for(let j=91;j<96;j++)if(rnd()<.8)v[j*W+i]=.28+rnd()*.08;
  const C=[[0,0,0,0],[.1,0,0,0],[.15,44,22,110],[.27,95,28,160],[.38,145,26,150],[.48,195,38,130],[.58,230,72,98],[.68,252,115,66],[.78,255,158,80],[.88,250,212,130],[1,255,250,215]];
  const c=r.querySelector('canvas'),x=c.getContext('2d'),im=x.createImageData(W,H);
  for(let i=0;i<W*H;i++){const q=Math.min(.999,Math.max(0,v[i]));let k=0;while(C[k+1][0]<q)k++;const a=C[k],b=C[k+1],t=(q-a[0])/(b[0]-a[0]);for(let m=0;m<3;m++)im.data[i*4+m]=a[m+1]+(b[m+1]-a[m+1])*t;im.data[i*4+3]=255;}
  x.putImageData(im,0,0);
});

define('scroll-rail',`<style>:host{width:23px;background:#fbfbfb;display:flex;flex-direction:column;align-items:center;padding-top:13px;flex:none}i{width:13px;height:951px;border-radius:7px;background:#8b8b8b;margin:12px 0 702px;flex:none}</style><svg width="15" height="11" style="flex:none"><path d="M0 11L6 1q1.500-2 3 0l6 10z" fill="#8b8b8b"/></svg><i></i><svg width="15" height="12" style="flex:none"><path d="M0 0l6 11q1.500 2 3 0l6-11z" fill="#8b8b8b"/></svg>`);

define('info-dialog',`<style>
:host{width:3637px;height:1859px;background:#fff;box-shadow:1px 1px 75px rgba(0,0,0,.32);border-radius:2px 2px 0 0;display:flex;flex-direction:column}
.t{height:75px;border-bottom:2px solid #f0f0f0;display:flex;align-items:center;justify-content:space-between;padding:0 27px 0 24px;font-size:21px;color:#333;flex:none}
.t span{padding-bottom:3px}
.b{height:1711px;display:flex;overflow:hidden;flex:none}.c{width:3614px}
.n{height:52px;padding-left:1755px}.tb{margin:0 8px 0 9px;border:1px solid #eee;border-width:0 1px}
.f{flex:1;display:flex;justify-content:flex-end;gap:15px;padding:23px 30px 0 0}</style>
<div class="t"><span>信息</span><svg width="16" height="16"><path d="M.5.5l15 15M15.500.5l-15 15" stroke="#222" stroke-width="1.500"/></svg></div>
<div class="b"><div class="c"><div class="n"><l-btn>新增片段</l-btn></div><div class="tb">
<group-panel label="第1组">
<grid-row h="136"><grid-cell w="458"><fit-text label>第1组</fit-text></grid-cell><grid-cell w="2191"><audio-player></audio-player><loop-check>循环播放</loop-check></grid-cell><grid-cell last></grid-cell></grid-row>
<grid-row h="460"><wave-view></wave-view></grid-row>
<grid-row h="168"><grid-cell w="458"><l-btn>播放区间队列</l-btn></grid-cell><grid-cell last left><play-queue><queue-item>区域1</queue-item><queue-item>区域2</queue-item></play-queue></grid-cell></grid-row>
<grid-row h="118"><grid-cell w="458"><fit-text label w="90">音频名称：</fit-text></grid-cell><grid-cell w="678"><text-input>AUDIO_Ex_Rogue_CN_1 0</text-input></grid-cell><grid-cell w="345"><fit-text label w="90">音频分类：</fit-text></grid-cell><grid-cell w="824" left><l-select>无效</l-select></grid-cell><grid-cell w="344"><fit-text label w="90">音频语种：</fit-text></grid-cell><grid-cell last><n-select>中英混合(zh)</n-select></grid-cell></grid-row>
<grid-row h="211"><grid-cell w="458"><fit-text label w="90">音频内容：</fit-text></grid-cell><grid-cell last left><text-area w="2954">只是一个猜测，历史上，也发生过这种事，多少和记忆体的活动相关。而如今乐土中，最有可能引起他们注意的，自然就是雷电牙医，和他的律者身份了。</text-area></grid-cell></grid-row>
<grid-row h="211"><grid-cell w="458"><fit-text label w="126">是否人工校准：</fit-text></grid-cell><grid-cell w="678"><toggle-switch></toggle-switch></grid-cell><grid-cell w="345"><fit-text label w="90">音频备注：</fit-text></grid-cell><grid-cell last left><text-area w="1931">1</text-area></grid-cell></grid-row>
</group-panel>
<group-panel label="第2组"><grid-row h="136"><grid-cell w="458"><fit-text label>第2组</fit-text></grid-cell><grid-cell w="2191"><audio-player></audio-player><loop-check>循环播放</loop-check></grid-cell><grid-cell last><l-btn>删除</l-btn></grid-cell></grid-row></group-panel>
</div></div><scroll-rail></scroll-rail></div>
<div class="f"><l-btn blue>确定</l-btn><l-btn plain>取消</l-btn></div>`);

/* red callouts floating above everything */
define('callout-layer',`<style>:host{position:absolute;inset:0;pointer-events:none;color:#ed1c24;font-size:22.500px}
svg{position:absolute;left:0;top:0}span{position:absolute;white-space:nowrap;line-height:32px}</style>
<svg width="3836" height="2020" fill="#ed1c24"><path d="M1660.500 203L1804 240.500V237L1828 258.500L1795 263L1801 255.500L1660 205.500Z"/><path d="M1152 338L1142 464L1150 463L1133 489.500L1123 458.500L1130.500 462.500L1151 338Z"/><path d="M2200 431L2258 547L2264.500 541L2263.500 574L2239 552L2248 551.500L2199.500 431Z"/><path d="M1534.500 1202L1235 1089L1239 1081.500L1206.500 1084L1229 1108L1230 1099.500L1534 1203.500Z"/><path d="M302.500 1465L351 1184L343 1186L361.500 1159L370 1190.500L361.500 1187L304 1465Z"/></svg>
<span style="left:2034px;top:247px">点击可添加新的切分组</span><span style="left:2420px;top:464px">操作鼠标可以添加多个切分区域作为子音频</span><span style="left:1520px;top:1149px">点击此按钮可删除此区域</span><span style="left:445px;top:1271px">点击此按钮，可以将多个区域合并播放</span>`);

define('browser-window',`<style>
:host{width:3836px;height:2020px;position:relative;background:#3b3b3b;overflow:hidden}
.page{margin:0 2px 0 6px;height:1909px;position:relative;overflow:hidden;border-radius:10px 10px 0 0}
.mask{position:absolute;inset:0;background:rgba(0,0,0,.3)}
info-dialog{position:absolute;left:96px;top:50px}
.moon{position:absolute;left:3708px;top:1643px;width:72px;height:72px;border-radius:50%;background:#100e28;display:flex;align-items:center;justify-content:center}</style>
<tab-strip></tab-strip><tool-bar></tool-bar>
<div class="page"><back-page></back-page><div class="mask"></div><info-dialog></info-dialog><div class="moon"><svg width="18" height="18"><circle cx="9" cy="9" r="9" fill="#4a2a66"/><circle cx="6" cy="6" r="2" fill="#2c1845"/><path d="M9 0a9 9 0 0 1 0 18z" fill="#ffcc33"/></svg></div></div>
<callout-layer></callout-layer>`);
</script>
</body>
</html>
